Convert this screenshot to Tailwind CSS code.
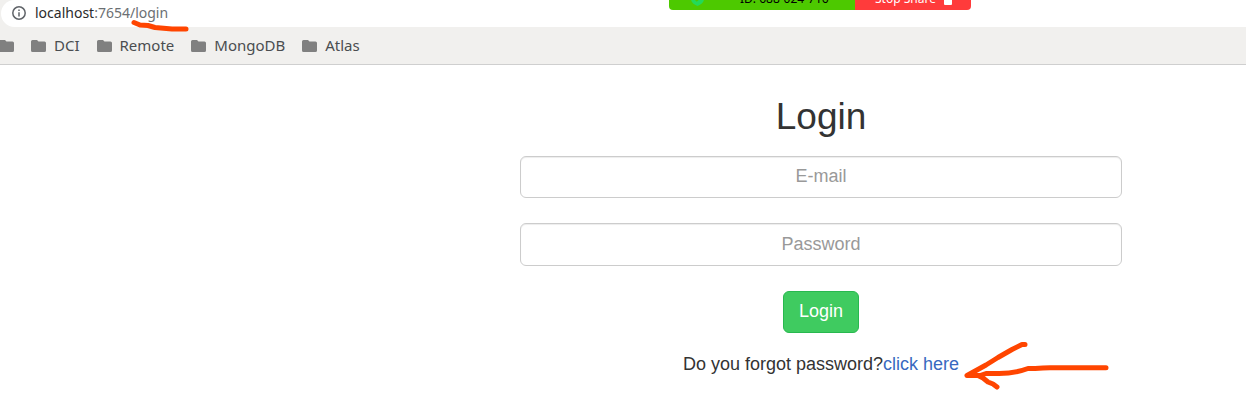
<!DOCTYPE html>
<html lang="en">
<head>
<meta charset="utf-8">
<title>Login</title>
<script src="https://cdn.jsdelivr.net/npm/@tailwindcss/browser@4"></script>
</head>
<body class="relative min-h-screen overflow-hidden bg-white font-['Liberation_Sans',sans-serif] text-[#333]">
<header class="border-b border-[#cfcfcf] bg-[#f1f0ee] font-['Noto_Sans',sans-serif]">
  <div class="ml-px flex h-[27px] items-center rounded-l-2xl bg-white pb-px pl-[11px]">
    <button type="button" aria-label="Site information" class="mr-[9px]">
      <svg class="block size-[14px]" viewBox="0 0 14 14" fill="none" stroke="#5f6368" stroke-width="1.5"><circle cx="7" cy="7" r="6.2"/><path d="M7 6.2v4.2M7 3.4v1.5"/></svg>
    </button>
    <div role="textbox" aria-label="Address" contenteditable="true" class="text-sm leading-5 text-[#6b6f73]"><span class="text-[#2b2b2b]">localhost</span>:7654/login</div>
  </div>
  <nav aria-label="Bookmarks" class="flex h-[37px] items-center gap-[17px] text-[15px] text-[#4a4d50]">
    <a href="#" aria-label="Folder"><svg class="-ml-px h-3 w-[15px]" viewBox="0 0 15 12" fill="#808080"><path d="M1.500 0H6l1.500 1.500h6A1.500 1.500 0 0 1 15 3v7.500a1.500 1.500 0 0 1-1.500 1.500h-12A1.500 1.500 0 0 1 0 10.500v-9A1.500 1.500 0 0 1 1.500 0Z"/></svg></a>
    <a href="#" class="flex items-center gap-2"><svg class="h-3 w-[15px]" viewBox="0 0 15 12" fill="#808080"><path d="M1.500 0H6l1.500 1.500h6A1.500 1.500 0 0 1 15 3v7.500a1.500 1.500 0 0 1-1.500 1.500h-12A1.500 1.500 0 0 1 0 10.500v-9A1.500 1.500 0 0 1 1.500 0Z"/></svg>DCI</a>
    <a href="#" class="flex items-center gap-2"><svg class="h-3 w-[15px]" viewBox="0 0 15 12" fill="#808080"><path d="M1.500 0H6l1.500 1.500h6A1.500 1.500 0 0 1 15 3v7.500a1.500 1.500 0 0 1-1.500 1.500h-12A1.500 1.500 0 0 1 0 10.500v-9A1.500 1.500 0 0 1 1.500 0Z"/></svg>Remote</a>
    <a href="#" class="flex items-center gap-2"><svg class="h-3 w-[15px]" viewBox="0 0 15 12" fill="#808080"><path d="M1.500 0H6l1.500 1.500h6A1.500 1.500 0 0 1 15 3v7.500a1.500 1.500 0 0 1-1.500 1.500h-12A1.500 1.500 0 0 1 0 10.500v-9A1.500 1.500 0 0 1 1.500 0Z"/></svg>MongoDB</a>
    <a href="#" class="flex items-center gap-2"><svg class="h-3 w-[15px]" viewBox="0 0 15 12" fill="#808080"><path d="M1.500 0H6l1.500 1.500h6A1.500 1.500 0 0 1 15 3v7.500a1.500 1.500 0 0 1-1.500 1.500h-12A1.500 1.500 0 0 1 0 10.500v-9A1.500 1.500 0 0 1 1.500 0Z"/></svg>Atlas</a>
  </nav>
</header>

<!-- Screen sharing bar, partly above the window's top edge -->
<div class="absolute -top-3 left-[669px] flex h-[22px] w-[302px] overflow-hidden rounded-b font-['Noto_Sans',sans-serif] text-xs leading-[22px]">
  <div class="flex w-[186px] items-center bg-[#4dc900] pl-[22px] text-black">
    <svg class="h-[14px] w-[13px]" viewBox="0 0 13 14"><path d="M6.500 0 13 2v5c0 3-2.500 5.500-6.500 7C2.500 12.500 0 10 0 7V2Z" fill="#23d959"/><path d="m3.500 6.500 2.300 2.300 4-4" fill="none" stroke="#4dc900" stroke-width="1.500"/></svg>
    <span class="ml-9">ID: 688-024-716</span>
  </div>
  <button type="button" class="flex flex-1 items-center bg-[#ff3b3b] pl-5 text-white">Stop Share<span class="mt-1 ml-2 size-[8px] rounded-[1px] bg-white"></span></button>
</div>

<main class="pt-7 pr-[124px] pl-[520px]">
  <form class="flex flex-col items-center text-lg leading-6">
    <h1 class="mb-4 text-[37px] leading-[47px]">Login</h1>
    <input type="email" aria-label="E-mail" placeholder="E-mail" class="mb-[25px] h-[42px] w-full rounded-md border border-[#ccc] px-4 pb-0.5 text-center shadow-[inset_0_1px_1px_rgba(0,0,0,0.075)] placeholder:text-[#999]">
    <input type="password" aria-label="Password" placeholder="Password" class="mb-[25px] h-[43px] w-full rounded-md border border-[#ccc] px-4 text-center shadow-[inset_0_1px_1px_rgba(0,0,0,0.075)] placeholder:text-[#999]">
    <button type="button" class="mb-[19px] h-[42px] w-[76px] rounded-md border border-[#28b84f] bg-[#3fcb60] pb-0.5 text-white">Login</button>
    <p class="whitespace-nowrap">Do you forgot password?<a href="#" class="text-[#3869c0]">click here</a></p>
  </form>
</main>

<!-- Hand-drawn marks over the page -->
<svg class="pointer-events-none absolute top-0 left-0" width="1246" height="404" viewBox="0 0 1246 404" fill="none" stroke="#ff4500" stroke-width="5" stroke-linecap="round" stroke-linejoin="round" aria-hidden="true">
  <path d="M134 22.500 140 25 148 25.500 155 27.500 172 29H186"/>
  <path d="M1025 344.500h-3l-10 5-14 8-12 7.500-19 10.500h13l6-2h13c13 0 21-2 29-5 12 0 16-.8 22-.8h56"/>
  <path d="M979 376l4 2 5 4 5 2 4 3"/>
</svg>
</body>
</html>
